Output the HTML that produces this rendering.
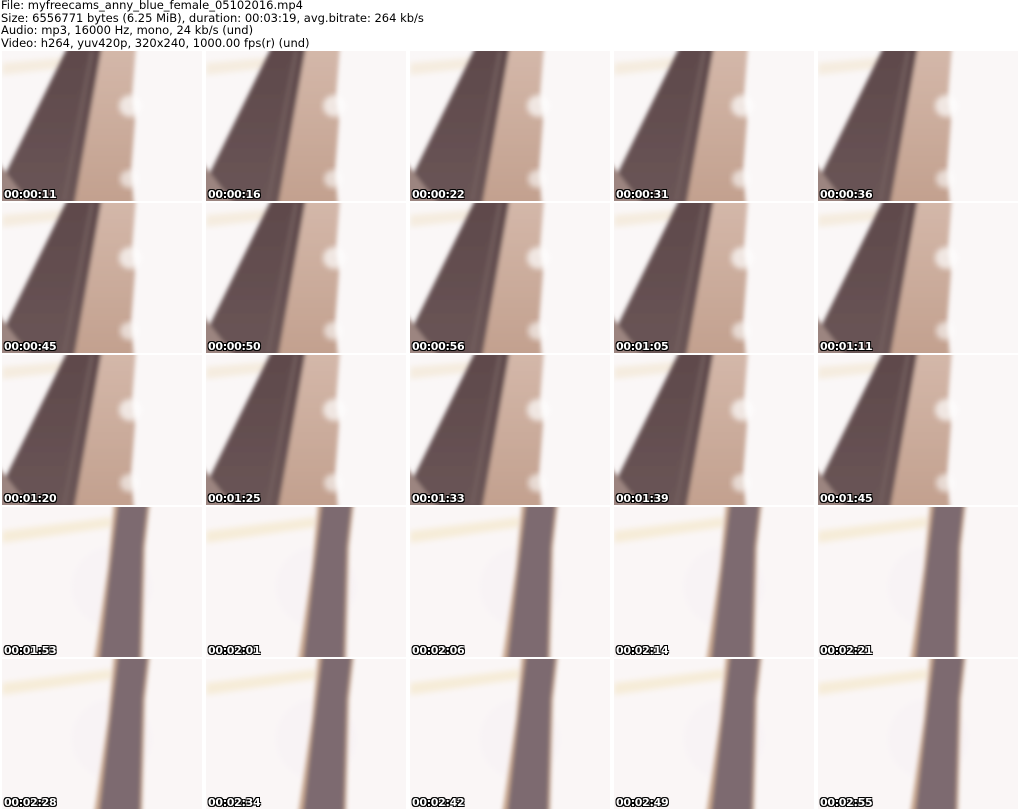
<!DOCTYPE html>
<html><head><meta charset="utf-8"><style>
body{margin:0;width:1024px;height:811px;background:#fff;overflow:hidden;position:relative;font-family:"DejaVu Sans","Liberation Sans",sans-serif}
.hdr{position:absolute;left:1px;top:-1px;font-size:11.5px;line-height:12.5px;color:#000;white-space:pre}
.t{position:absolute;width:200px;height:150px;overflow:hidden}
.t svg{position:absolute;left:0;top:0}
.ts{position:absolute;left:2px;bottom:0px;font:bold 11px "DejaVu Sans",sans-serif;color:#fff;letter-spacing:-0.3px;text-shadow:1px 1px 0 #000,-1px -1px 0 #000,1px -1px 0 #000,-1px 1px 0 #000}
</style></head><body>
<svg width="0" height="0" style="position:absolute">
<defs>
<filter id="b" x="-20%" y="-20%" width="140%" height="140%"><feGaussianBlur stdDeviation="3"/></filter>
<filter id="b2" x="-20%" y="-20%" width="140%" height="140%"><feGaussianBlur stdDeviation="2"/></filter>
<linearGradient id="gd" x1="0" y1="0" x2="0" y2="1"><stop offset="0" stop-color="#5e494b"/><stop offset="1" stop-color="#6a5556"/></linearGradient>
<linearGradient id="gt" x1="0" y1="0" x2="0" y2="1"><stop offset="0" stop-color="#d4b8aa"/><stop offset="1" stop-color="#c2a08e"/></linearGradient>
<symbol id="A" viewBox="0 0 200 150">
<rect width="200" height="150" fill="#faf7f7"/>
<polygon points="0,12 70,6 70,16 0,24" fill="#f5ecdf" filter="url(#b)"/>
<g filter="url(#b2)">
<polygon points="98,-5 134,-5 130,45 133,70 129,120 132,155 68,155" fill="url(#gt)"/>
<polygon points="66,-5 100,-5 72,155 -5,155 -5,140" fill="url(#gd)"/>
<polygon points="-5,110 30,155 -5,155" fill="#9c8580"/>
<line x1="90" y1="0" x2="62" y2="150" stroke="#74605f" stroke-width="3"/>
</g>
<circle cx="128" cy="55" r="11" fill="#fff" opacity=".7" filter="url(#b)"/>
<circle cx="127" cy="128" r="9" fill="#fff" opacity=".6" filter="url(#b)"/>
</symbol>
<symbol id="B" viewBox="0 0 200 150">
<rect width="200" height="150" fill="#faf6f6"/>
<polygon points="0,24 110,10 110,20 0,36" fill="#f6ecd8" filter="url(#b)"/>
<circle cx="110" cy="80" r="40" fill="#f8f3f5" filter="url(#b)"/>
<g filter="url(#b2)">
<polygon points="112,-5 148,-5 143,40 140,155 92,155 106,60" fill="#c9a890"/>
<polygon points="116,-5 146,-5 141,40 138,155 97,155 108,60" fill="#7d6a70"/>
</g>
</symbol>
</defs></svg>
<div class="hdr">File: myfreecams_anny_blue_female_05102016.mp4
Size: 6556771 bytes (6.25 MiB), duration: 00:03:19, avg.bitrate: 264 kb/s
Audio: mp3, 16000 Hz, mono, 24 kb/s (und)
Video: h264, yuv420p, 320x240, 1000.00 fps(r) (und)</div>

<div class="t" style="left:2px;top:51px"><svg width="200" height="150"><use href="#A"/></svg><div class="ts">00:00:11</div></div>
<div class="t" style="left:206px;top:51px"><svg width="200" height="150"><use href="#A"/></svg><div class="ts">00:00:16</div></div>
<div class="t" style="left:410px;top:51px"><svg width="200" height="150"><use href="#A"/></svg><div class="ts">00:00:22</div></div>
<div class="t" style="left:614px;top:51px"><svg width="200" height="150"><use href="#A"/></svg><div class="ts">00:00:31</div></div>
<div class="t" style="left:818px;top:51px"><svg width="200" height="150"><use href="#A"/></svg><div class="ts">00:00:36</div></div>

<div class="t" style="left:2px;top:203px"><svg width="200" height="150"><use href="#A"/></svg><div class="ts">00:00:45</div></div>
<div class="t" style="left:206px;top:203px"><svg width="200" height="150"><use href="#A"/></svg><div class="ts">00:00:50</div></div>
<div class="t" style="left:410px;top:203px"><svg width="200" height="150"><use href="#A"/></svg><div class="ts">00:00:56</div></div>
<div class="t" style="left:614px;top:203px"><svg width="200" height="150"><use href="#A"/></svg><div class="ts">00:01:05</div></div>
<div class="t" style="left:818px;top:203px"><svg width="200" height="150"><use href="#A"/></svg><div class="ts">00:01:11</div></div>

<div class="t" style="left:2px;top:355px"><svg width="200" height="150"><use href="#A"/></svg><div class="ts">00:01:20</div></div>
<div class="t" style="left:206px;top:355px"><svg width="200" height="150"><use href="#A"/></svg><div class="ts">00:01:25</div></div>
<div class="t" style="left:410px;top:355px"><svg width="200" height="150"><use href="#A"/></svg><div class="ts">00:01:33</div></div>
<div class="t" style="left:614px;top:355px"><svg width="200" height="150"><use href="#A"/></svg><div class="ts">00:01:39</div></div>
<div class="t" style="left:818px;top:355px"><svg width="200" height="150"><use href="#A"/></svg><div class="ts">00:01:45</div></div>

<div class="t" style="left:2px;top:507px"><svg width="200" height="150"><use href="#B"/></svg><div class="ts">00:01:53</div></div>
<div class="t" style="left:206px;top:507px"><svg width="200" height="150"><use href="#B"/></svg><div class="ts">00:02:01</div></div>
<div class="t" style="left:410px;top:507px"><svg width="200" height="150"><use href="#B"/></svg><div class="ts">00:02:06</div></div>
<div class="t" style="left:614px;top:507px"><svg width="200" height="150"><use href="#B"/></svg><div class="ts">00:02:14</div></div>
<div class="t" style="left:818px;top:507px"><svg width="200" height="150"><use href="#B"/></svg><div class="ts">00:02:21</div></div>

<div class="t" style="left:2px;top:659px"><svg width="200" height="150"><use href="#B"/></svg><div class="ts">00:02:28</div></div>
<div class="t" style="left:206px;top:659px"><svg width="200" height="150"><use href="#B"/></svg><div class="ts">00:02:34</div></div>
<div class="t" style="left:410px;top:659px"><svg width="200" height="150"><use href="#B"/></svg><div class="ts">00:02:42</div></div>
<div class="t" style="left:614px;top:659px"><svg width="200" height="150"><use href="#B"/></svg><div class="ts">00:02:49</div></div>
<div class="t" style="left:818px;top:659px"><svg width="200" height="150"><use href="#B"/></svg><div class="ts">00:02:55</div></div>
</body></html>
